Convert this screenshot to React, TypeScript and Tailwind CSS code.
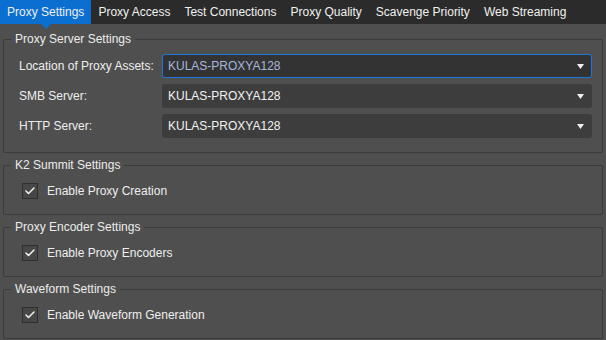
import { Check } from 'lucide-react'

const tabs = ['Proxy Settings', 'Proxy Access', 'Test Connections', 'Proxy Quality', 'Scavenge Priority', 'Web Streaming']

const servers = [
  { label: 'Location of Proxy Assets:', value: 'KULAS-PROXYA128', focused: true },
  { label: 'SMB Server:', value: 'KULAS-PROXYA128' },
  { label: 'HTTP Server:', value: 'KULAS-PROXYA128' },
]

function Select({ value, focused }: { value: string; focused?: boolean }) {
  return (
    <div
      className={`flex h-6 flex-1 items-center justify-between rounded-[3px] pl-[5px] pr-[7px] ${
        focused ? 'border border-[#1a78dc] bg-[#333333] text-[#a7b6dd]' : 'border border-transparent bg-[#3d3d3d] text-[#f2f2f2]'
      }`}
    >
      <span>{value}</span>
      <svg width="7" height="5" viewBox="0 0 7 5" className="fill-[#f0f0f0]">
        <path d="M0 0h7L3.5 5z" />
      </svg>
    </div>
  )
}

function Group({ title, children }: { title: string; children: React.ReactNode }) {
  return (
    <fieldset className="mx-[3px] rounded-[2px] border border-[#3b3b3b]">
      <legend className="ml-[7px] px-1 leading-4 text-[#ececec]">{title}</legend>
      {children}
    </fieldset>
  )
}

function CheckRow({ label }: { label: string }) {
  return (
    <div className="flex items-center gap-[9px] pl-[18px] pt-[9px] pb-[14px]">
      <div className="flex h-4 w-4 items-center justify-center border border-[#2f2f2f] bg-[#474747]">
        <Check className="h-3 w-3 text-[#f4f4f4]" strokeWidth={3} />
      </div>
      <span className="text-[#eeeeee]">{label}</span>
    </div>
  )
}

export default function App() {
  return (
    <div className="h-[340px] w-[606px] overflow-hidden bg-[#4f4f4f] text-[12px] font-['Liberation_Sans',sans-serif]">
      {/* Tabs */}
      <div className="flex h-6 bg-[#2b2b2b] text-[#f0f0f0]">
        {tabs.map((t, i) => (
          <div
            key={t}
            className={`relative flex items-center px-[7px] ${i === 0 ? 'bg-[#0b6fd1]' : ''}`}
          >
            {t}
            {i === 0 && (
              <span className="absolute left-1/2 top-full h-0 w-0 -translate-x-1/2 border-x-[5px] border-t-[5px] border-x-transparent border-t-[#0b6fd1]" />
            )}
          </div>
        ))}
      </div>

      <div className="flex flex-col gap-1 pt-[7px]">
        <Group title="Proxy Server Settings">
          <div className="flex flex-col gap-[6px] pb-[14px] pl-[15px] pr-[10px] pt-[7px]">
            {servers.map((s) => (
              <div key={s.label} className="flex items-center">
                <span className="w-[143px] text-[#eeeeee]">{s.label}</span>
                <Select value={s.value} focused={s.focused} />
              </div>
            ))}
          </div>
        </Group>
        <Group title="K2 Summit Settings">
          <CheckRow label="Enable Proxy Creation" />
        </Group>
        <Group title="Proxy Encoder Settings">
          <CheckRow label="Enable Proxy Encoders" />
        </Group>
        <Group title="Waveform Settings">
          <CheckRow label="Enable Waveform Generation" />
        </Group>
      </div>
    </div>
  )
}
